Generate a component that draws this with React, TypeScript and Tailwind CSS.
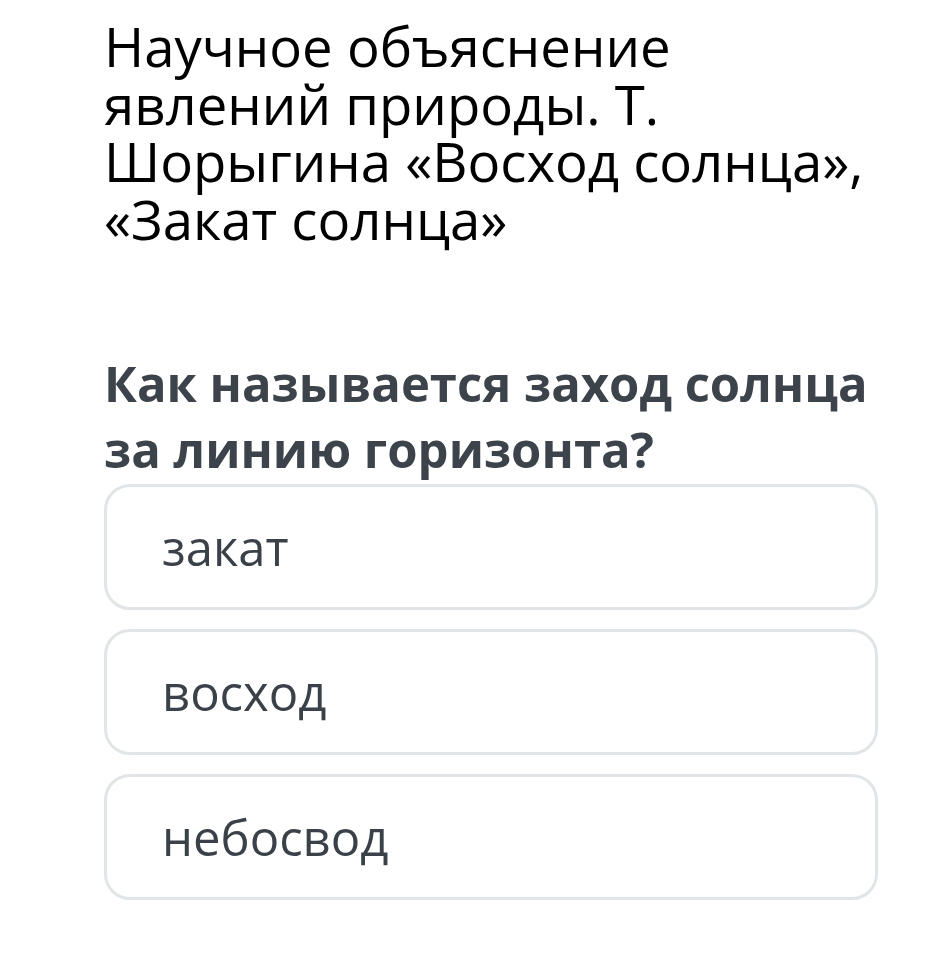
export default function App() {
  const options = ['закат', 'восход', 'небосвод'];

  return (
    <div className="min-h-screen bg-white" style={{ fontFamily: '"Open Sans", "Noto Sans", sans-serif' }}>
      <div className="pl-[104px] pr-[51px] pt-[18px]">
        {/* Title */}
        <h1 className="text-[54.5px] leading-[57.5px] font-normal text-black">
          Научное объяснение явлений природы. Т. Шорыгина «Восход солнца», «Закат солнца»
        </h1>

        {/* Question */}
        <h2 className="mt-[102px] text-[49px] leading-[66px] font-bold text-[#3d434b]">
          Как называется заход солнца за линию горизонта?
        </h2>

        {/* Answers */}
        <div className="mt-[2px] flex flex-col gap-[19px]">
          {options.map((option) => (
            <div
              key={option}
              className="h-[126px] rounded-[26px] border-[3px] border-[#e2e5e7] bg-white pl-[55px] pt-[32px]"
            >
              <span className="block text-[49px] leading-[56px] text-[#3b4149]">{option}</span>
            </div>
          ))}
        </div>
      </div>
    </div>
  );
}
